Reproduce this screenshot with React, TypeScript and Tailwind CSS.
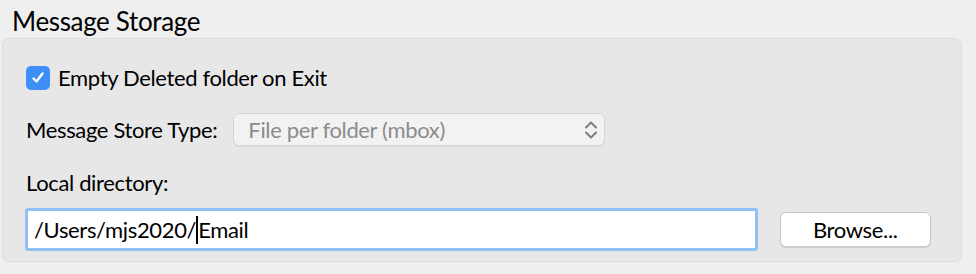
import React from 'react';

function Chevrons() {
  return (
    <svg width="14" height="20" viewBox="0 0 14 20" fill="none" stroke="#7d7d7d" strokeWidth="2" strokeLinecap="round" strokeLinejoin="round">
      <path d="M2 7.5 L7 2.5 L12 7.5" />
      <path d="M2 12.5 L7 17.5 L12 12.5" />
    </svg>
  );
}

function Checkbox({ checked }: { checked: boolean }) {
  return (
    <span className="flex h-[24px] w-[24px] items-center justify-center rounded-[5px] bg-[#3d8ef7]">
      {checked && (
        <svg width="16" height="16" viewBox="0 0 16 16" fill="none" stroke="white" strokeWidth="2.4" strokeLinecap="round" strokeLinejoin="round">
          <path d="M3.5 8.5 L6.5 11.5 L12.5 3.5" />
        </svg>
      )}
    </span>
  );
}

export default function App() {
  return (
    <div className="h-[274px] w-[976px] bg-[#efefef] pl-[2px] pr-[14px] tracking-[-0.35px] text-black" style={{ fontFamily: 'Lato, "Noto Sans", sans-serif' }}>
      <h2 className="pl-[10px] pt-[4px] text-[26px] leading-[34px]">Message Storage</h2>

      <div className="h-[224px] rounded-[7px] border border-[#dcdcdc] bg-[#e7e7e7] pl-[22px] pr-[30px] pt-[27px]">
        <label className="flex items-center gap-[8px] pl-[1px]">
          <Checkbox checked />
          <span className="text-[22px] leading-[24px]">Empty Deleted folder on Exit</span>
        </label>

        <div className="mt-[23px] flex items-center gap-[16px]">
          <span className="pl-[1px] text-[22px]">Message Store Type:</span>
          <div className="flex h-[33px] w-[372px] items-center justify-between rounded-[6px] border border-[#d6d6d6] bg-[#f2f2f2] pl-[14px] pr-[6px] shadow-[0_1px_1px_rgba(0,0,0,0.06)]">
            <span className="text-[22px] text-[#8c8c8c]">File per folder (mbox)</span>
            <Chevrons />
          </div>
        </div>

        <div className="mt-[22px] pl-[1px] text-[22px] leading-[30px]">Local directory:</div>

        <div className="mt-[10px] flex items-center gap-[22px]">
          <div className="flex h-[43px] w-[735px] items-center rounded-[3px] border-[3px] border-[#92bff4] bg-white pl-[6px]">
            <span className="text-[22px]">/Users/mjs2020/</span>
            <span className="h-[28px] w-[2px] bg-black" />
            <span className="text-[22px]">Email</span>
          </div>
          <button className="h-[35px] w-[152px] rounded-[6px] border border-[#c9c9c9] bg-white text-[22px] shadow-[0_1px_1px_rgba(0,0,0,0.12)]">
            Browse...
          </button>
        </div>
      </div>
    </div>
  );
}
